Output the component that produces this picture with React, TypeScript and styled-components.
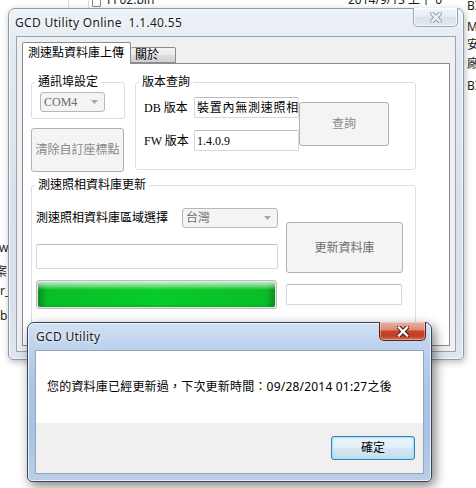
import React from "react";
import styled, { createGlobalStyle } from "styled-components";

const UI_SANS = `"Noto Sans", "Noto Sans CJK TC", sans-serif`;
const UI_SERIF = `"Liberation Serif", "Noto Sans CJK TC", serif`;

const GlobalStyle = createGlobalStyle`
  html, body { margin: 0; padding: 0; background: #ffffff; }
  body { overflow: hidden; }
  *, *::before, *::after { box-sizing: border-box; }
`;

const Desktop = styled.div`
  position: relative;
  width: 476px;
  height: 488px;
  overflow: hidden;
  background: #ffffff;
  font-family: ${UI_SANS};
`;

/* ---------- explorer window behind (free canvas) ---------- */
const BgText = styled.span<{ $x: number; $y: number }>`
  position: absolute;
  left: ${(p) => p.$x}px;
  top: ${(p) => p.$y}px;
  font-size: 12px;
  line-height: 14px;
  color: #1c1c1c;
  white-space: nowrap;
`;

const BgRule = styled.div<{ $x: number }>`
  position: absolute;
  left: ${(p) => p.$x}px;
  top: 0;
  width: 1px;
  height: 9px;
  background: #dedede;
`;

const BgFileIcon = styled.svg`
  position: absolute;
  left: 92px;
  top: -3px;
`;

/* ---------- windows ---------- */
const Window = styled.div<{ $active?: boolean }>`
  position: absolute;
  display: flex;
  flex-direction: column;
  border: 1px solid ${(p) => (p.$active ? "#34475f" : "#8b98a8")};
  border-radius: 7px 7px 5px 5px;
  background: ${(p) =>
    p.$active
      ? "linear-gradient(180deg, #d3e2f3 0%, #bfd4ee 12%, #abc5e7 40%, #a8c2e5 70%, #b9cfea 100%)"
      : "linear-gradient(180deg, #eef3f8 0%, #e3e9f1 12%, #dae3ed 50%, #d7e0eb 80%, #dfe6ef 100%)"};
  box-shadow: inset 0 0 0 1px rgba(255, 255, 255, 0.7),
    ${(p) =>
      p.$active
        ? "3px 4px 12px rgba(0, 0, 0, 0.5)"
        : "1px 2px 7px rgba(0, 0, 0, 0.28)"};
`;

const MainWindow = styled(Window)`
  left: 8px;
  top: 8px;
  width: 456px;
  height: 352px;
`;

const DialogWindow = styled(Window)`
  left: 27px;
  top: 322px;
  width: 405px;
  height: 160px;
`;

const TitleBar = styled.div<{ $indent: number }>`
  height: 27px;
  flex: none;
  display: flex;
  align-items: center;
  padding-left: ${(p) => p.$indent}px;
  padding-right: 5px;
`;

const TitleText = styled.span`
  font-family: ${UI_SANS};
  font-size: 12px;
  line-height: 14px;
  letter-spacing: 0.3px;
  color: #1a1a1a;
  white-space: pre;
  text-shadow: 0 0 6px rgba(255, 255, 255, 0.95), 0 0 2px rgba(255, 255, 255, 0.9);
`;

const CloseButton = styled.div<{ $active?: boolean }>`
  align-self: flex-start;
  margin-left: auto;
  margin-top: -1px;
  width: ${(p) => (p.$active ? 47 : 45)}px;
  height: 19px;
  border: 1px solid ${(p) => (p.$active ? "#5e2219" : "#9aa6b4")};
  border-top: none;
  border-radius: 0 0 5px 5px;
  display: flex;
  align-items: center;
  justify-content: center;
  background: ${(p) =>
    p.$active
      ? "linear-gradient(180deg, #eab0a2 0%, #de8a77 44%, #c8452c 50%, #c13d25 78%, #d9735b 100%)"
      : "linear-gradient(180deg, #f4f7fa 0%, #e6ecf2 48%, #dbe2ea 52%, #e4eaf0 100%)"};
  box-shadow: inset 0 0 0 1px rgba(255, 255, 255, ${(p) => (p.$active ? 0.35 : 0.7)});
`;

const ClientFrame = styled.div`
  flex: 1;
  margin: 0 7px 7px;
  background: #f0f0f0;
  border: 1px solid #97a5b6;
  display: flex;
  flex-direction: column;
`;

/* ---------- tab control ---------- */
const TabArea = styled.div`
  flex: 1;
  display: flex;
  flex-direction: column;
  padding: 5px 5px 5px 5px;
`;

const TabStrip = styled.div`
  height: 21px;
  display: flex;
  align-items: flex-end;
`;

const Tab = styled.div<{ $selected?: boolean }>`
  position: relative;
  z-index: ${(p) => (p.$selected ? 2 : 1)};
  height: ${(p) => (p.$selected ? 22 : 16)}px;
  margin-bottom: ${(p) => (p.$selected ? -1 : 0)}px;
  padding: ${(p) => (p.$selected ? "0 6px 0 5px" : "0 16px 0 4px")};
  border: 1px solid #898c95;
  border-bottom: ${(p) => (p.$selected ? "none" : "1px solid #898c95")};
  border-left: ${(p) => (p.$selected ? "1px solid #898c95" : "none")};
  border-radius: 2px 2px 0 0;
  background: ${(p) =>
    p.$selected
      ? "#ffffff"
      : "linear-gradient(180deg, #f3f3f3 0%, #ebebeb 50%, #dedede 51%, #d2d2d2 100%)"};
  font-family: ${UI_SERIF};
  font-size: 12px;
  line-height: 14px;
  color: #000;
  display: flex;
  align-items: ${(p) => (p.$selected ? "flex-start" : "center")};
  padding-top: ${(p) => (p.$selected ? 3 : 0)}px;
  white-space: nowrap;
`;

const TabPage = styled.div`
  flex: 1;
  background: #ffffff;
  border: 1px solid #898c95;
  padding: 11px 0 0 8px;
  display: flex;
  flex-direction: column;
  gap: 6px;
  font-family: ${UI_SERIF};
  font-size: 12px;
  color: #000;
`;

const TopRow = styled.div`
  display: grid;
  grid-template-columns: 94px 281px;
  column-gap: 10px;
  align-items: start;
`;

const LeftColumn = styled.div`
  display: flex;
  flex-direction: column;
  gap: 9px;
`;

const GroupBox = styled.fieldset<{ $h: number; $w?: number }>`
  margin: 0;
  padding: 0;
  min-width: 0;
  height: ${(p) => p.$h}px;
  width: ${(p) => (p.$w ? `${p.$w}px` : "auto")};
  border: 1px solid #d5dfe5;
  border-radius: 3px;
`;

const GroupTitle = styled.legend`
  margin-left: 3px;
  padding: 0 3px;
  font-family: ${UI_SERIF};
  font-size: 12px;
  line-height: 14px;
  color: #000;
`;

const PortBody = styled.div`
  padding: 3px 0 0 8px;
`;

const Combo = styled.div<{ $w: number; $h: number }>`
  position: relative;
  width: ${(p) => p.$w}px;
  height: ${(p) => p.$h}px;
  border: 1px solid #b4b7bb;
  border-radius: 3px;
  background: #f4f4f4;
  color: #6d6d6d;
  font-size: 12px;
  line-height: 14px;
  display: flex;
  align-items: center;
  padding-left: 3px;
  white-space: nowrap;
`;

const ComboArrow = styled.svg`
  position: absolute;
  right: 6px;
  top: 50%;
  margin-top: -2px;
`;

const WinButton = styled.button<{ $w: number; $h: number; $tone?: "dim" | "soft" }>`
  width: ${(p) => p.$w}px;
  height: ${(p) => p.$h}px;
  margin: 0;
  padding: 0;
  border: 1px solid #adb2b5;
  border-radius: 3px;
  background: #f4f4f4;
  color: ${(p) => (p.$tone === "soft" ? "#6e6e6e" : "#8a8a8a")};
  font-family: ${UI_SANS};
  font-size: 12px;
  line-height: 14px;
  white-space: nowrap;
  cursor: default;
`;

const DefaultButton = styled.button`
  width: 84px;
  height: 24px;
  margin: 0;
  padding: 0;
  border: 1px solid #3c7fb1;
  border-radius: 3px;
  background: linear-gradient(180deg, #eaf6fd 0%, #e4f0f8 45%, #d3e6f2 55%, #c9dfee 100%);
  box-shadow: inset 0 0 0 1px #a9e3fa, inset 0 0 3px rgba(80, 190, 240, 0.6);
  color: #000;
  font-family: ${UI_SANS};
  font-size: 12px;
  line-height: 14px;
  cursor: default;
`;

const VersionGrid = styled.div`
  display: grid;
  grid-template-columns: 50px 105px 90px;
  grid-template-rows: 21px 21px;
  column-gap: 0;
  row-gap: 12px;
  padding: 8px 0 0 8px;
`;

const FieldLabel = styled.span`
  font-size: 12px;
  line-height: 14px;
  align-self: center;
  white-space: nowrap;
`;

const TextBox = styled.div<{ $w: number; $h: number; $spread?: boolean }>`
  width: ${(p) => p.$w}px;
  height: ${(p) => p.$h}px;
  border: 1px solid #d4d7dc;
  border-top-color: #b9bcc2;
  border-radius: 2px;
  background: #ffffff;
  padding: 0 2px;
  display: flex;
  align-items: center;
  overflow: hidden;
  white-space: nowrap;
  font-size: 12px;
  line-height: 14px;
  letter-spacing: ${(p) => (p.$spread ? "0.75px" : "0")};
  color: #000;
`;

const QueryCell = styled.div`
  grid-column: 3;
  grid-row: 1 / 3;
  align-self: center;
  justify-self: end;
  display: flex;
`;

const UpdateBody = styled.div`
  display: grid;
  grid-template-columns: 242px 117px;
  column-gap: 8px;
  padding: 16px 0 0 4px;
`;

const UpdateLeft = styled.div`
  display: flex;
  flex-direction: column;
`;

const RegionRow = styled.div`
  display: grid;
  grid-template-columns: 1fr 96px;
  align-items: center;
  height: 20px;
  margin-bottom: 16px;
`;

const UpdateRight = styled.div`
  display: flex;
  flex-direction: column;
  gap: 11px;
  padding-top: 14px;
`;

const ProgressTrack = styled.div`
  margin-top: 11px;
  width: 241px;
  height: 29px;
  border: 1px solid #bcbcbc;
  border-radius: 3px;
  background: #e6e6e6;
  padding: 1px;
`;

const ProgressFill = styled.div`
  height: 100%;
  border-radius: 2px;
  background: linear-gradient(
      180deg,
      rgba(255, 255, 255, 0.75) 0%,
      rgba(255, 255, 255, 0.35) 18%,
      rgba(255, 255, 255, 0) 32%,
      rgba(0, 0, 0, 0) 85%,
      rgba(0, 0, 0, 0.08) 100%
    ),
    linear-gradient(90deg, #0c8e1e 0%, #08be27 4%, #06cc28 50%, #08be27 96%, #0c8e1e 100%);
`;

/* ---------- dialog ---------- */
const MessageArea = styled.div`
  height: 72px;
  background: #ffffff;
  display: flex;
  align-items: center;
  padding-left: 11px;
  font-family: ${UI_SANS};
  font-size: 12px;
  line-height: 14px;
  letter-spacing: 0.2px;
  color: #000;
  white-space: nowrap;
`;

const DialogFooter = styled.div`
  flex: 1;
  display: flex;
  justify-content: flex-end;
  align-items: flex-start;
  padding: 13px 8px 0 0;
`;

function CloseGlyph({ active }: { active?: boolean }) {
  return (
    <svg width="12" height="11" viewBox="0 0 12 11">
      <path
        d="M2 1.5 L10 9.5 M10 1.5 L2 9.5"
        stroke={active ? "#4a130c" : "#8e9bab"}
        strokeWidth="4.4"
        strokeLinecap="square"
        fill="none"
      />
      <path
        d="M2 1.5 L10 9.5 M10 1.5 L2 9.5"
        stroke={active ? "#ffffff" : "#eef2f6"}
        strokeWidth="2.4"
        strokeLinecap="square"
        fill="none"
      />
    </svg>
  );
}

function DropArrow() {
  return (
    <ComboArrow width="7" height="4" viewBox="0 0 7 4">
      <path d="M0 0 L7 0 L3.5 4 Z" fill="#a6a6a6" />
    </ComboArrow>
  );
}

export default function App() {
  return (
    <Desktop>
      <GlobalStyle />

      <BgRule $x={68} />
      <BgRule $x={88} />
      <BgFileIcon width="9" height="10" viewBox="0 0 9 10">
        <path d="M0.5 0.5 H6 L8.5 3 V9.5 H0.5 Z" fill="#fff" stroke="#8c8c8c" />
      </BgFileIcon>
      <BgText $x={107} $y={-7}>FF02.bin</BgText>
      <BgText $x={348} $y={-7}>2014/9/13 上午 0</BgText>
      <BgText $x={467} $y={-1}>BI</BgText>
      <BgText $x={467} $y={20}>M</BgText>
      <BgText $x={467} $y={38}>安</BgText>
      <BgText $x={467} $y={57}>廠</BgText>
      <BgText $x={467} $y={79}>BI</BgText>
      <BgText $x={-1} $y={241}>w</BgText>
      <BgText $x={-5} $y={265}>案</BgText>
      <BgText $x={0} $y={284}>r_</BgText>
      <BgText $x={0} $y={309}>b</BgText>

      <MainWindow>
        <TitleBar $indent={6}>
          <TitleText>GCD Utility Online  1.1.40.55</TitleText>
          <CloseButton>
            <CloseGlyph />
          </CloseButton>
        </TitleBar>
        <ClientFrame>
          <TabArea>
            <TabStrip>
              <Tab $selected>測速點資料庫上傳</Tab>
              <Tab>關於</Tab>
            </TabStrip>
            <TabPage>
              <TopRow>
                <LeftColumn>
                  <GroupBox $h={44}>
                    <GroupTitle>通訊埠設定</GroupTitle>
                    <PortBody>
                      <Combo $w={65} $h={20}>
                        COM4
                        <DropArrow />
                      </Combo>
                    </PortBody>
                  </GroupBox>
                  <WinButton $w={93} $h={44} disabled>
                    清除自訂座標點
                  </WinButton>
                </LeftColumn>
                <GroupBox $h={95}>
                  <GroupTitle>版本查詢</GroupTitle>
                  <VersionGrid>
                    <FieldLabel>DB 版本</FieldLabel>
                    <TextBox $w={105} $h={21} $spread>
                      裝置內無測速照相資料
                    </TextBox>
                    <QueryCell>
                      <WinButton $w={90} $h={44} disabled>
                        查詢
                      </WinButton>
                    </QueryCell>
                    <FieldLabel>FW 版本</FieldLabel>
                    <TextBox $w={105} $h={21}>1.4.0.9</TextBox>
                  </VersionGrid>
                </GroupBox>
              </TopRow>
              <GroupBox $h={150} $w={385}>
                <GroupTitle>測速照相資料庫更新</GroupTitle>
                <UpdateBody>
                  <UpdateLeft>
                    <RegionRow>
                      <FieldLabel>測速照相資料庫區域選擇</FieldLabel>
                      <Combo $w={96} $h={20}>
                        台灣
                        <DropArrow />
                      </Combo>
                    </RegionRow>
                    <TextBox $w={242} $h={25} />
                    <ProgressTrack>
                      <ProgressFill />
                    </ProgressTrack>
                  </UpdateLeft>
                  <UpdateRight>
                    <WinButton $w={117} $h={51} $tone="soft" disabled>
                      更新資料庫
                    </WinButton>
                    <TextBox $w={116} $h={21} />
                  </UpdateRight>
                </UpdateBody>
              </GroupBox>
            </TabPage>
          </TabArea>
        </ClientFrame>
      </MainWindow>

      <DialogWindow $active>
        <TitleBar $indent={8}>
          <TitleText>GCD Utility</TitleText>
          <CloseButton $active>
            <CloseGlyph active />
          </CloseButton>
        </TitleBar>
        <ClientFrame>
          <MessageArea>您的資料庫已經更新過，下次更新時間：09/28/2014 01:27之後</MessageArea>
          <DialogFooter>
            <DefaultButton>確定</DefaultButton>
          </DialogFooter>
        </ClientFrame>
      </DialogWindow>
    </Desktop>
  );
}
